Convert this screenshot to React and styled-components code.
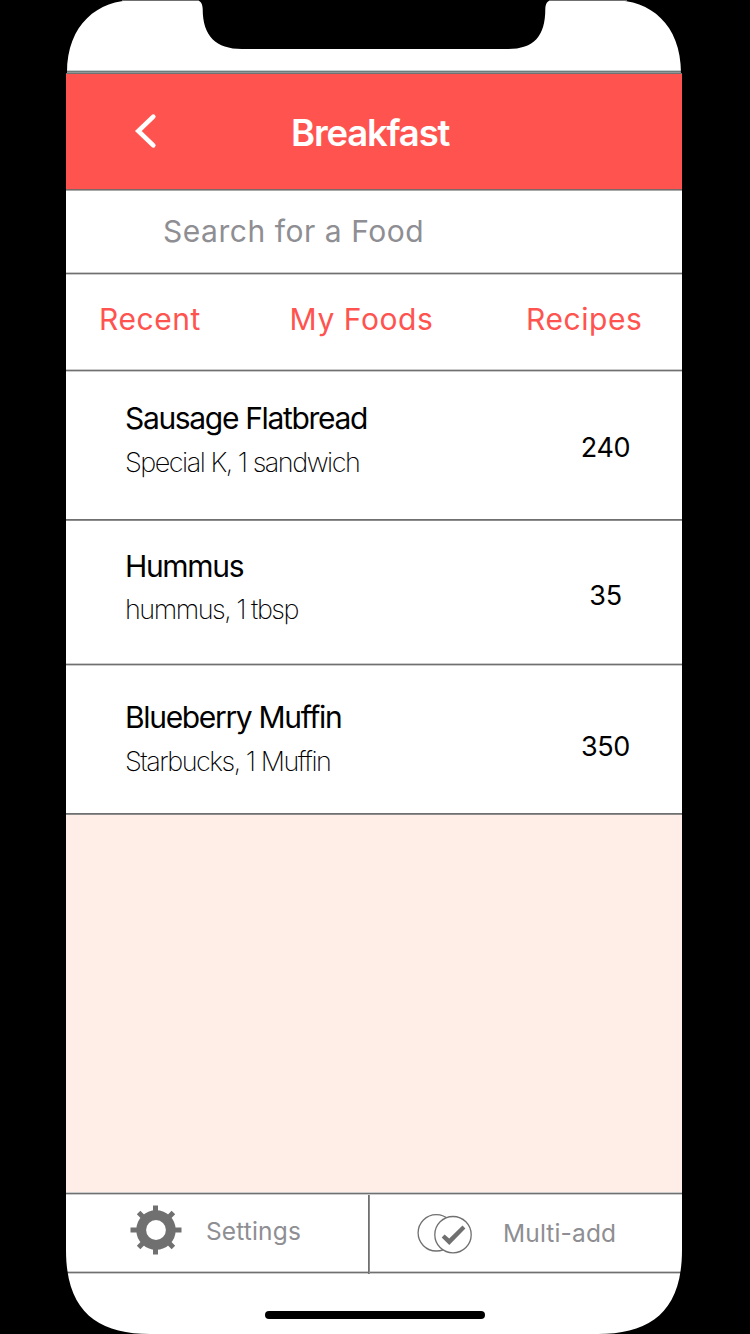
import React from "react";
import styled, { createGlobalStyle, ThemeProvider } from "styled-components";

const theme = {
  colors: {
    primary: "#ff534f",
    background: "#feeee7",
    line: "#707070",
    lineSoft: "#cbcbcb",
    muted: "#8e8e93",
    text: "#000"
  },
  font: `Inter, "Liberation Sans", sans-serif`
};

const GlobalStyle = createGlobalStyle`
  * {
    box-sizing: border-box;
  }
  body {
    margin: 0;
    background: #000;
  }
`;

const Page = styled.div`
  display: flex;
  height: 1334px;
  padding: 0 68px 0 66px;
  background: #000;
  font-family: ${props => props.theme.font};
`;

const Phone = styled.main`
  display: flex;
  flex-direction: column;
  flex: 1;
  position: relative;
  overflow: hidden;
  background: #fff;
  color: ${props => props.theme.colors.text};
`;

const Frame = styled.svg`
  position: absolute;
  top: 0;
  left: 0;
  pointer-events: none;
`;

const StatusBar = styled.div`
  height: 70px;
`;

const HeaderLine = styled.div`
  height: 4px;
  background: linear-gradient(#c9d2d1 1px, #707b7b 1px 2px, #8f9797 2px 3px, #717171 3px);
`;

// A hairline with a lighter edge on one or both sides
const Line = styled.div`
  flex: none;
  height: ${props => (props.$thick ? 2 : 3)}px;
  background: ${({ $thick, theme: { colors } }) =>
    $thick
      ? `linear-gradient(${colors.line} 1px, #8c8c8c 1px)`
      : `linear-gradient(${colors.lineSoft} 1px, ${colors.line} 1px 2px, ${colors.lineSoft} 2px)`};
`;

const Header = styled.header`
  display: flex;
  align-items: center;
  height: 115px;
  padding: 3px 0 0 68px;
  background: ${props => props.theme.colors.primary};
`;

const BackButton = styled.button`
  display: flex;
  width: 26px;
  height: 40px;
  margin: 0 131px 5px 0;
  padding: 0;
  border: none;
  background: none;
`;

const Title = styled.h1`
  margin: 0;
  color: #fff;
  font-size: 36.5px;
  font-weight: 600;
  letter-spacing: -1.18px;
`;

const HeaderBottom = styled.div`
  height: 2px;
  background: linear-gradient(#7b6867 1px, #a9a9a9 1px);
`;

const Search = styled.div`
  height: 81px;
  padding-left: 97px;
  color: ${props => props.theme.colors.muted};
  font-size: 30px;
  line-height: 80px;
  letter-spacing: 0.54px;
`;

const Tabs = styled.nav`
  display: flex;
  justify-content: space-between;
  height: 94px;
  padding: 0 39.5px 0 33px;
`;

const Tab = styled.a`
  color: ${props => props.theme.colors.primary};
  font-size: 30px;
  line-height: 88px;
  letter-spacing: 0.57px;
`;

const MiddleTab = styled(Tab)`
  margin-right: 4px;
`;

const Row = styled.div`
  display: flex;
  justify-content: space-between;
  height: ${props => props.$height}px;
  padding: ${props => props.$top}px 26.5px 0 59px;
  line-height: 44px;
`;

const Name = styled.div`
  font-size: 30px;
  letter-spacing: -1.33px;
`;

const Detail = styled.div`
  margin-top: ${props => props.$offset}px;
  font-size: 27px;
  font-weight: 200;
  letter-spacing: -1.49px;
`;

const Calories = styled.div`
  width: 100px;
  margin-top: 30px;
  font-size: 27px;
  letter-spacing: -0.3px;
  text-align: center;
`;

const Empty = styled.div`
  flex: 1;
  background: ${props => props.theme.colors.background};
`;

const Footer = styled.footer`
  display: flex;
  height: 76px;
`;

const Action = styled.div`
  display: flex;
  align-items: flex-start;
  gap: ${props => props.$gap}px;
  padding: ${props => props.$top}px 0 0 ${props => props.$left}px;
`;

const SettingsAction = styled(Action)`
  width: 302px;
`;

const Label = styled.span`
  margin-top: ${props => props.$offset}px;
  color: ${props => props.theme.colors.muted};
  font-size: 24.5px;
  line-height: 30px;
  letter-spacing: 0.15px;
`;

const Divider = styled.div`
  width: 2px;
  height: 79px;
  background: linear-gradient(90deg, #707070 1px, #8c8c8c 1px);
  z-index: 1;
`;

const HomeArea = styled.div`
  display: flex;
  justify-content: center;
  height: 60px;
  padding: 37px 0 0 2px;
`;

const HomeIndicator = styled.div`
  width: 220px;
  height: 8px;
  border-radius: 4px;
  background: #000;
`;

const foods = [
  { name: "Sausage Flatbread", detail: "Special K, 1 sandwich", calories: 240, height: 147, top: 24, gap: 1, thick: true },
  { name: "Hummus", detail: "hummus, 1 tbsp", calories: 35, height: 142, top: 23, gap: 0, thick: false },
  { name: "Blueberry Muffin", detail: "Starbucks, 1 Muffin", calories: 350, height: 147, top: 29, gap: 1, thick: true }
];

const BackIcon = () => (
  <svg width="26" height="40" viewBox="0 0 26 40">
    <path
      d="M19.3 5.6 4.3 20l15 14.4"
      fill="none"
      stroke="#fff"
      strokeWidth="4.6"
      strokeLinecap="round"
    />
  </svg>
);

const GearIcon = () => (
  <svg width="52" height="50" viewBox="-26 -25 52 50">
    <circle r="14.8" fill="none" stroke="#707070" strokeWidth="9.8" />
    <g stroke="#707070" strokeWidth="5">
      <path d="M-25.5 0H-18M18 0H25.5M-.5-24.5V-18M-.5 18V24.5" />
      <path d="M-17.4-17.4-12-12M12-12 17.4-17.4M-17.4 17.4-12 12M12 12 17.4 17.4" />
    </g>
  </svg>
);

const MultiAddIcon = () => (
  <svg width="56" height="42" viewBox="417 1213 56 42">
    <g fill="#fff" stroke="#707070" strokeWidth="1.3">
      <circle cx="436.3" cy="1232.8" r="18.2" />
      <circle cx="453" cy="1234.7" r="18.2" />
    </g>
    <path
      d="M441.7 1237.4 444.6 1234.4 449.2 1238.4 462.5 1225.5 465.4 1228.6 449.3 1245Z"
      fill="#707070"
    />
  </svg>
);

const PhoneFrame = () => (
  <Frame width="616" height="1334" viewBox="66 0 616 1334">
    <path d="M66 0H135C98 0 67 24 67 73H66Z" />
    <path d="M682 0H613C650 0 681 24 681 73H682Z" />
    <path d="M66 1334H150C98 1334 66 1312 66 1250Z" />
    <path d="M682 1334H598C650 1334 682 1312 682 1250Z" />
    <path d="M197 0C201 1 202.5 4 202.7 9C202.7 36 216 49 242 49H508C534 49 545.3 36 545.3 9C545.5 4 547 1 551 0Z" />
    <path d="M122 .5H198M550 .5H627" stroke="#707070" />
  </Frame>
);

const App = () => (
  <ThemeProvider theme={theme}>
    <GlobalStyle />
    <Page>
      <Phone>
        <StatusBar />
        <HeaderLine />
        <Header>
          <BackButton aria-label="Back">
            <BackIcon />
          </BackButton>
          <Title>Breakfast</Title>
        </Header>
        <HeaderBottom />
        <Search>Search for a Food</Search>
        <Line />
        <Tabs>
          <Tab>Recent</Tab>
          <MiddleTab>My Foods</MiddleTab>
          <Tab>Recipes</Tab>
        </Tabs>
        <Line />
        {foods.map(food => (
          <React.Fragment key={food.name}>
            <Row $height={food.height} $top={food.top}>
              <div>
                <Name>{food.name}</Name>
                <Detail $offset={food.gap}>{food.detail}</Detail>
              </div>
              <Calories>{food.calories}</Calories>
            </Row>
            <Line $thick={food.thick} />
          </React.Fragment>
        ))}
        <Empty />
        <Line />
        <Footer>
          <SettingsAction $top={10} $left={64.3} $gap={23.7}>
            <GearIcon />
            <Label $offset={11}>Settings</Label>
          </SettingsAction>
          <Divider />
          <Action $top={18} $left={47} $gap={30}>
            <MultiAddIcon />
            <Label $offset={5.3}>Multi-add</Label>
          </Action>
        </Footer>
        <Line />
        <HomeArea>
          <HomeIndicator />
        </HomeArea>
        <PhoneFrame />
      </Phone>
    </Page>
  </ThemeProvider>
);

export default App;
